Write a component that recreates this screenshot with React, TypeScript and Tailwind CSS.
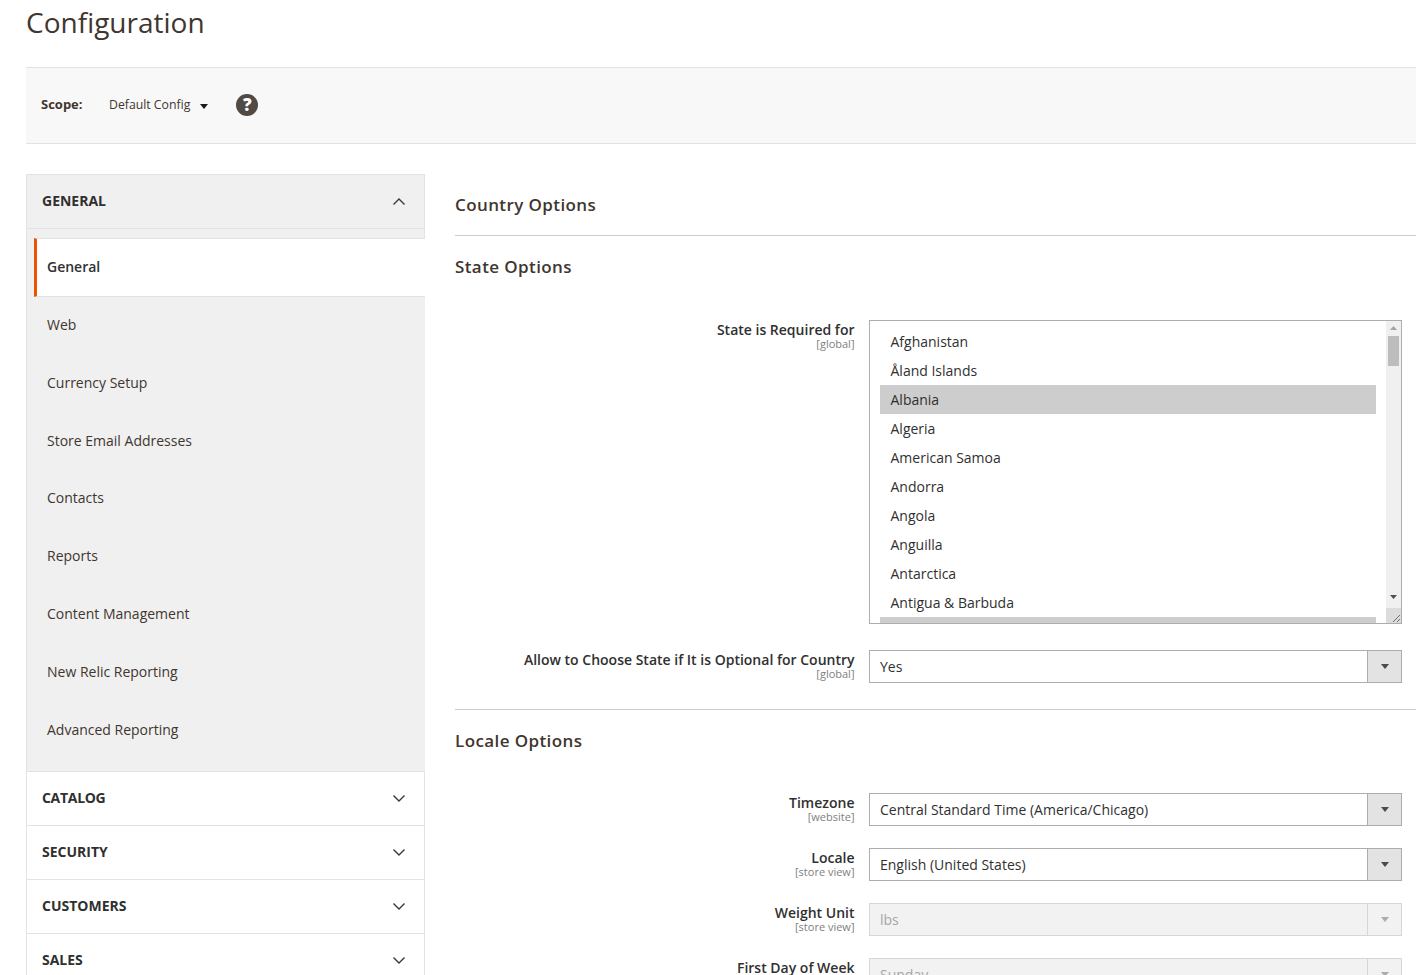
const tabs = ['Web', 'Currency Setup', 'Store Email Addresses', 'Contacts', 'Reports', 'Content Management', 'New Relic Reporting', 'Advanced Reporting']
const collapsed = ['CATALOG', 'SECURITY', 'CUSTOMERS', 'SALES']
const countries = ['Afghanistan', 'Åland Islands', 'Albania', 'Algeria', 'American Samoa', 'Andorra', 'Angola', 'Anguilla', 'Antarctica', 'Antigua & Barbuda', 'Argentina']

function Chevron({ up }: { up?: boolean }) {
  return (
    <svg width="12" height="7" viewBox="0 0 12 7" fill="none" stroke="#41362f" strokeWidth="1.4">
      <polyline points={up ? '0.5,6.5 6,1 11.5,6.5' : '0.5,0.5 6,6 11.5,0.5'} />
    </svg>
  )
}

function Arrow({ color = '#514943' }: { color?: string }) {
  return (
    <svg width="8" height="5" viewBox="0 0 8 5">
      <polygon points="0,0 8,0 4,5" fill={color} />
    </svg>
  )
}

function Label({ text, scope }: { text: string; scope: string }) {
  return (
    <div className="w-[399.5px] shrink-0 text-right pt-[1px]">
      <div className="text-[14px] leading-[18px] font-semibold text-[#303030]">{text}</div>
      <div className="-mt-[1px] text-[11px] leading-[11px] text-[#808080]">{scope}</div>
    </div>
  )
}

function Select({ value, disabled }: { value: string; disabled?: boolean }) {
  return (
    <div className={`flex-1 h-[33px] flex border ${disabled ? 'border-[#d6d6d6] bg-[#f2f2f2] text-[#a6a6a6]' : 'border-[#adadad] bg-white text-[#303030]'}`}>
      <div className="flex-1 pl-[10px] text-[14px] leading-[31px]">{value}</div>
      <div className={`w-[34px] flex items-center justify-center border-l ${disabled ? 'border-[#d6d6d6]' : 'border-[#adadad] bg-[#e3e3e3]'}`}>
        <Arrow color={disabled ? '#b0aca9' : '#514943'} />
      </div>
    </div>
  )
}

function Row({ text, scope, value, disabled, className }: { text: string; scope: string; value: string; disabled?: boolean; className: string }) {
  return (
    <div className={`flex gap-[14.5px] ${className}`}>
      <Label text={text} scope={scope} />
      <Select value={value} disabled={disabled} />
    </div>
  )
}

function ListBox() {
  return (
    <div className="flex-1 h-[304px] flex border border-[#adadad] bg-white overflow-hidden">
      <div className="flex-1 min-w-0 pt-[6px] px-[10px] overflow-hidden">
        {countries.map(name => (
          <div key={name} className={`h-[29px] shrink-0 px-[10.5px] text-[14px] leading-[29px] text-[#303030] ${name === 'Albania' || name === 'Argentina' ? 'bg-[#cdcdcd]' : ''}`}>
            {name}
          </div>
        ))}
      </div>
      <div className="w-[15px] shrink-0 flex flex-col items-center bg-[#f0f0f0]">
        <svg className="mt-[5px]" width="7" height="4" viewBox="0 0 7 4"><polygon points="0,4 7,4 3.5,0" fill="#a3a3a3" /></svg>
        <div className="w-[11px] h-[30px] mt-[6px] bg-[#bdbdbd]" />
        <svg className="mt-auto mb-[9px]" width="7" height="4" viewBox="0 0 7 4"><polygon points="0,0 7,0 3.5,4" fill="#505050" /></svg>
        <svg className="bg-[#dcdcdc]" width="15" height="15" viewBox="0 0 15 15" stroke="#707070" strokeWidth="1">
          <line x1="7" y1="14" x2="14" y2="7" />
          <line x1="11" y1="14" x2="14" y2="11" />
        </svg>
      </div>
    </div>
  )
}

function SectionTitle({ children, className }: { children: string; className: string }) {
  return <h3 className={`text-[17px] leading-[24px] font-semibold tracking-[0.4px] text-[#41362f] ${className}`}>{children}</h3>
}

export default function App() {
  return (
    <div className="w-[1416px] h-[975px] overflow-hidden bg-white pl-[26px] font-['Open_Sans',sans-serif]">
      <h1 className="h-[67px] pt-[3px] text-[28px] leading-[38px] font-normal text-[#41362f]">Configuration</h1>

      <div className="h-[77px] flex items-center pl-[15px] pb-[2px] bg-[#f8f8f8] border-y border-[#e3e3e3] text-[13px] text-[#41362f]">
        <span className="w-[68px] font-bold">Scope:</span>
        <span className="mt-[2px] text-[12.25px]">Default Config</span>
        <span className="ml-[10px] mt-[3px] flex"><Arrow color="#1a1a1a" /></span>
        <span className="ml-[28px] w-[22px] h-[22px] rounded-full bg-[#514943] text-white text-[17px] leading-[22px] font-extrabold text-center">?</span>
      </div>

      <div className="flex mt-[30px] gap-[30px]">
        <aside className="w-[399px] shrink-0">
          <div className="border border-[#e3e3e3] border-b-0 bg-[#f0f0f0]">
            <div className="h-[54px] flex items-center justify-between pl-[15px] pr-[19px] border-b border-[#e3e3e3]">
              <span className="pb-[2px] text-[14px] font-bold text-[#303030]">GENERAL</span>
              <Chevron up />
            </div>
            <div className="h-[9px]" />
          </div>
          <div className="bg-[#f0f0f0] border-l border-b border-[#e3e3e3] pb-[11.44px]">
            <div className="h-[59px] ml-[7px] flex items-center pl-[10px] pb-[2px] bg-white border-l-[3px] border-[#eb5202] border-y border-y-[#e3e3e3] text-[14px] font-semibold text-[#303030]">
              General
            </div>
            {tabs.map(tab => (
              <div key={tab} className="h-[57.82px] flex items-center pl-[20px] pb-[3px] text-[14px] text-[#41362f]">{tab}</div>
            ))}
          </div>
          {collapsed.map(name => (
            <div key={name} className="h-[54px] flex items-center justify-between pl-[15px] pr-[19px] border-x border-b border-[#e3e3e3] bg-white">
              <span className={`pb-[2px] text-[14px] font-bold text-[#303030] ${name === 'CATALOG' ? 'tracking-[-0.3px]' : ''}`}>{name}</span>
              <Chevron />
            </div>
          ))}
        </aside>

        <main className="flex-1 min-w-0 pr-[14px]">
          <div className="-mr-[14px] h-[62px] pt-[19px] border-b border-[#cccccc]">
            <SectionTitle className="">Country Options</SectionTitle>
          </div>
          <SectionTitle className="mt-[19px]">State Options</SectionTitle>

          <div className="flex gap-[14.5px] mt-[41px]">
            <Label text="State is Required for" scope="[global]" />
            <ListBox />
          </div>
          <Row className="mt-[26px]" text="Allow to Choose State if It is Optional for Country" scope="[global]" value="Yes" />

          <div className="-mr-[14px] mt-[26px] border-b border-[#cccccc]" />
          <SectionTitle className="mt-[19px]">Locale Options</SectionTitle>

          <Row className="mt-[40px]" text="Timezone" scope="[website]" value="Central Standard Time (America/Chicago)" />
          <Row className="mt-[22px]" text="Locale" scope="[store view]" value="English (United States)" />
          <Row className="mt-[22px]" text="Weight Unit" scope="[store view]" value="lbs" disabled />
          <Row className="mt-[22px]" text="First Day of Week" scope="[store view]" value="Sunday" disabled />
        </main>
      </div>
    </div>
  )
}
